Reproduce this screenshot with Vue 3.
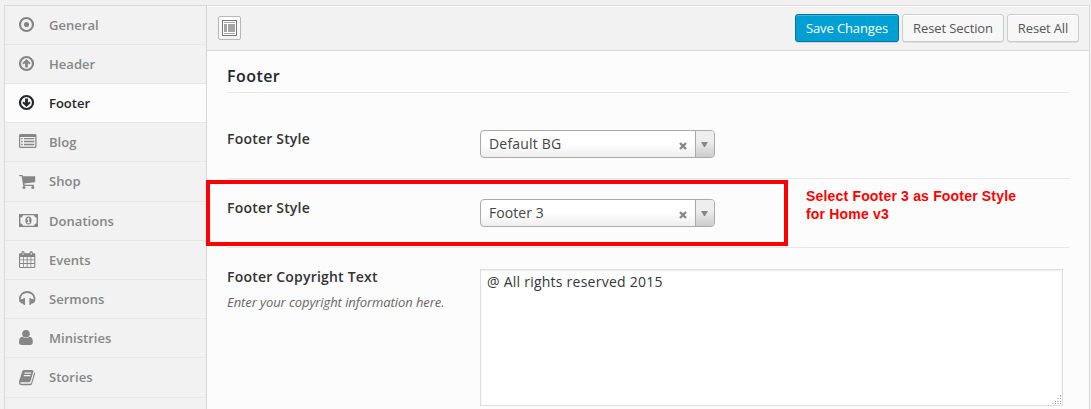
<script setup>
const items = [
  { label: 'General', icon: 'dot' },
  { label: 'Header', icon: 'up' },
  { label: 'Footer', icon: 'down', active: true },
  { label: 'Blog', icon: 'list' },
  { label: 'Shop', icon: 'cart', tall: true },
  { label: 'Donations', icon: 'money' },
  { label: 'Events', icon: 'calendar' },
  { label: 'Sermons', icon: 'headphones' },
  { label: 'Ministries', icon: 'user' },
  { label: 'Stories', icon: 'book', tall: true },
]
const selects = ['Default BG', 'Footer 3']
</script>

<template>
  <div class="page">
    <div class="panel">
      <nav class="sidebar">
        <a v-for="item in items" :key="item.label" class="item" :class="{ active: item.active, tall: item.tall }">
          <svg class="icon" width="20" height="20" viewBox="0 0 20 20" fill="currentColor">
            <template v-if="item.icon === 'dot'">
              <circle cx="7.5" cy="9.5" r="6.5" fill="none" stroke="currentColor" stroke-width="2.2" />
              <circle cx="7.5" cy="9.5" r="2.6" />
            </template>
            <template v-else-if="item.icon === 'up'">
              <circle cx="7.5" cy="9.5" r="6.5" fill="none" stroke="currentColor" stroke-width="2.2" />
              <path d="M7.5 4.9L11.6 9.1L10.5 10.4L8.9 9.2V13.5H6.1V9.2L4.5 10.4L3.4 9.1Z" />
            </template>
            <template v-else-if="item.icon === 'down'">
              <circle cx="7.5" cy="9.5" r="6.5" fill="none" stroke="currentColor" stroke-width="2.2" />
              <path d="M7.5 14.1L11.6 9.9L10.5 8.6L8.9 9.8V5.5H6.1V9.8L4.5 8.6L3.4 9.9Z" />
            </template>
            <path v-else-if="item.icon === 'list'" fill-rule="evenodd" d="M1.5 2H16Q17.5 2 17.5 3.5V14.5Q17.5 16 16 16H1.5Q0 16 0 14.5V3.5Q0 2 1.5 2ZM1.2 5V14.2Q1.2 14.8 1.8 14.8H15.7Q16.3 14.8 16.3 14.2V5ZM2.2 6H3.7V7.3H2.2ZM5 6H15.3V7.3H5ZM2.2 8.7H3.7V10.2H2.2ZM5 8.7H15.3V10.2H5ZM2.2 11.7H3.7V13.2H2.2ZM5 11.7H15.3V13.2H5Z" />
            <template v-else-if="item.icon === 'cart'">
              <path d="M.6 4H3.2Q3.8 4 4 5.2H15.6Q16.2 5.2 16.2 5.8V10.6Q16.2 11.2 15.6 11.3L5.4 12.5L5.6 13.8H14.4Q15 13.8 15 14.4T14.4 15H4.8Q4.2 15 4.1 14.3L2.7 5.3H.6Q0 5.3 0 4.6T.6 4Z" />
              <circle cx="5" cy="16.6" r="1.5" /><circle cx="13.8" cy="16.6" r="1.5" />
            </template>
            <template v-else-if="item.icon === 'money'">
              <path fill-rule="evenodd" d="M0 3H19V16H0ZM4 4.3Q3.6 6.4 1.4 6.8V12.2Q3.6 12.6 4 14.7H15Q15.4 12.6 17.6 12.2V6.8Q15.4 6.4 15 4.3ZM9.5 5.4Q12.6 5.4 12.6 9.5T9.5 13.6T6.4 9.5T9.5 5.4ZM9.1 6.7L7.7 8L8.4 8.8L9 8.4V11.2H8V12.2H11.1V11.2H10.2V6.7Z" />
            </template>
            <path v-else-if="item.icon === 'calendar'" fill-rule="evenodd" d="M1.3 3.2H2.4V2.5Q2.4 1 4 1T5.6 2.5V3.2H10.6V2.5Q10.6 1 12.2 1T13.8 2.5V3.2H15Q16.3 3.2 16.3 4.5V16.8Q16.3 18 15 18H1.3Q0 18 0 16.8V4.5Q0 3.2 1.3 3.2ZM3.6 2.5V5H4.4V2.5ZM11.8 2.5V5H12.6V2.5ZM1.1 7V9.4H4V7ZM4.8 7V9.4H7.7V7ZM8.6 7V9.4H11.5V7ZM12.3 7V9.4H15.2V7ZM1.1 10.3V13.1H4V10.3ZM4.8 10.3V13.1H7.7V10.3ZM8.6 10.3V13.1H11.5V10.3ZM12.3 10.3V13.1H15.2V10.3ZM1.1 14V16.9H4V14ZM4.8 14V16.9H7.7V14ZM8.6 14V16.9H11.5V14ZM12.3 14V16.9H15.2V14Z" />
            <template v-else-if="item.icon === 'headphones'">
              <path fill="none" stroke="currentColor" stroke-width="1.8" d="M1.7 13Q.9 11.7 .9 9.8C.9 5.8 4.2 3 8.2 3S15.5 5.8 15.5 9.8Q15.5 11.7 14.7 13" />
              <path d="M6 9V16H4.8L4.4 14.9Q2 14.7 .8 12.8L1.8 10.6Q3 9.8 4.5 9.8L4.8 9ZM10.4 9V16H11.6L12 14.9Q14.4 14.7 15.6 12.8L14.6 10.6Q13.4 9.8 11.9 9.8L11.6 9Z" />
            </template>
            <template v-else-if="item.icon === 'user'">
              <circle cx="7" cy="5.8" r="3.8" />
              <path d="M3.5 8.8Q7 11.4 10.5 8.8C13 8.9 13.8 11.2 13.8 14Q13.8 17 11.2 17H2.6Q0 17 0 14C0 11.2 1 8.9 3.5 8.8Z" />
            </template>
            <template v-else>
              <path fill-rule="evenodd" d="M5 3H13.2Q14.8 3 14.4 4.5L11.6 14.1Q11.2 15.3 9.8 15.3H2Q1.3 15.3 1.2 16Q1.3 16.8 2.5 16.8H11Q11.9 16.8 12.2 16L15.1 6.3Q15.2 5.8 15.1 5Q16.4 5.5 16 7L13.2 16.6Q12.8 18.2 11.2 18.2H2.6Q0 18.2 0 15.8L.2 13.8L3.2 4.4Q3.7 3 5 3ZM5.7 5.6L5.4 6.7H12.1L12.4 5.6ZM4.9 8.1L4.6 9.2H11.3L11.6 8.1Z" />
            </template>
          </svg>
          <span>{{ item.label }}</span>
        </a>
      </nav>

      <main class="main">
        <header class="toolbar">
          <button class="expand" aria-label="Expand options">
            <svg width="15" height="16" viewBox="0 0 15 16">
              <rect x=".5" y=".5" width="14" height="15" fill="#fff" stroke="#777" />
              <path fill="#a5a5a5" d="M2 2H13V3H2ZM2 4H5V12H2ZM6 4H13V12H6ZM2 13H13V14H2Z" />
            </svg>
          </button>
          <div class="actions">
            <button class="btn primary">Save Changes</button>
            <button class="btn section">Reset Section</button>
            <button class="btn all">Reset All</button>
          </div>
        </header>

        <section class="content">
          <h2>Footer</h2>
          <div v-for="(value, i) in selects" :key="value" class="row" :class="{ first: i === 0 }">
            <div class="label">Footer Style</div>
            <div class="select">
              <span class="value">{{ value }}</span>
              <svg class="clear" width="8" height="8" viewBox="0 0 8 8"><path d="M1 1L7 7M7 1L1 7" stroke="#888" stroke-width="2.4" /></svg>
              <span class="arrow"><svg width="7" height="5" viewBox="0 0 7 5"><path d="M0 0H7L4 5H3Z" fill="#888" /></svg></span>
            </div>
          </div>
          <div class="row last">
            <div class="label">
              Footer Copyright Text
              <p>Enter your copyright information here.</p>
            </div>
            <div class="field">
              <textarea spellcheck="false">@ All rights reserved 2015</textarea>
              <svg class="grip" width="10" height="10" viewBox="0 0 10 10">
                <path fill="#999" d="M8 0h1v1h-1zM8 3h1v1h-1zM3 6h1v1h-1zM8 6h1v1h-1zM3 8h1v1h-1zM8 8h1v1h-1z" />
                <path fill="#ccc" d="M8 1h1v1h-1zM5 3h2v1h-2zM5 6h2v1h-2zM0 8h2v1h-2zM5 8h2v1h-2z" />
              </svg>
            </div>
          </div>
        </section>
      </main>
    </div>
    <div class="highlight"></div>
    <div class="note">Select Footer 3 as Footer Style<br />for Home v3</div>
  </div>
</template>

<style>
body { margin: 0; background: #f1f1f1; }
</style>

<style scoped>
* { box-sizing: border-box; }
.page { position: relative; width: 1091px; height: 409px; overflow: hidden; padding: 5px 1px 0 4px; background: #f1f1f1; font-family: "Open Sans", "Noto Sans", sans-serif; }
.panel { display: flex; height: 420px; border: 1px solid #dadada; background: #f2f2f2; }
.sidebar { width: 201px; flex: none; }
.item { display: flex; align-items: flex-start; height: 39px; border-bottom: 1px solid #e7e7e7; color: #868686; padding: 9px 0 0 14px; font-size: 13px; font-weight: 600; line-height: 20px; letter-spacing: .04px; }
.item.tall { height: 40px; }
.item.active { background: #fcfcfc; color: #23282d; letter-spacing: 0; }
.icon { flex: none; margin-right: 10px; }
.main { flex: 1; border-left: 1px solid #d5d5d5; background: #fcfcfc; }
.toolbar { height: 45px; display: flex; justify-content: space-between; align-items: flex-start; border-top: 1px solid #fff; border-bottom: 1px solid #d8d8d8; background: #f2f2f2; padding: 7px 10px 0 11px; }
button { font-family: inherit; margin: 0; padding: 0; }
.expand { margin-top: 2px; width: 23px; height: 24px; border: 1px solid #b8b8b8; border-radius: 2px; background: linear-gradient(#fff, #f3f3f3); display: flex; align-items: center; justify-content: center; }
.actions { display: flex; gap: 3px; }
.btn { height: 28px; border: 1px solid #ccc; border-radius: 3px; background: #f7f7f7; box-shadow: inset 0 1px 0 #fff, 0 1px 0 rgba(0, 0, 0, .08); color: #555; font-size: 13px; line-height: 26px; text-align: center; white-space: nowrap; letter-spacing: -.1px; }
.primary { width: 104px; background: #00a0d2; border-color: #0073aa; color: #fff; box-shadow: inset 0 1px 0 rgba(120, 200, 230, .5), 0 1px 0 rgba(0, 0, 0, .1); }
.section { width: 102px; }
.all { width: 72px; letter-spacing: -.15px; }
.content { padding: 0 20px; }
h2 { margin: 0; height: 42px; border-bottom: 1px solid #e7e7e7; padding-top: 13px; font-size: 16px; line-height: 24px; font-weight: 600; letter-spacing: .45px; color: #23282d; }
.row { display: flex; height: 69px; padding-top: 20px; border-bottom: 1px solid #e7e7e7; }
.row.first { height: 86px; padding-top: 37px; }
.row.last { height: 170px; padding-top: 21px; border: 0; }
.label { width: 253px; flex: none; margin-top: -1px; color: #333; font-size: 14px; line-height: 19px; font-weight: 600; letter-spacing: .2px; }
.row.last .label { margin-top: -2px; }
.label p { margin: 7px 0 0; font-size: 13px; line-height: 18px; font-weight: 400; font-style: italic; letter-spacing: -.08px; color: #666; }
.select { display: flex; align-items: center; width: 235px; height: 28px; border: 1px solid #aaa; border-radius: 4px; background: linear-gradient(#fff 50%, #eee); overflow: hidden; }
.value { flex: 1; padding-left: 8px; font-size: 14px; line-height: 26px; letter-spacing: .05px; color: #444; }
.first .value { letter-spacing: .2px; }
.clear { margin: 4px 8px 0 0; }
.arrow { width: 19px; height: 26px; border-left: 1px solid #aaa; background: linear-gradient(#eee 40%, #ccc); display: flex; align-items: flex-start; padding: 11px 0 0 5px; }
.arrow svg { flex: none; }
.field { position: relative; width: 583px; height: 137px; }
textarea { display: block; width: 100%; height: 100%; margin: 0; resize: none; border: 1px solid #ddd; border-radius: 0; background: #fff; box-shadow: inset 0 1px 2px rgba(0, 0, 0, .07); padding: 2px 6px; font-family: inherit; font-size: 14px; line-height: 20px; letter-spacing: .24px; color: #32373c; outline: none; }
.grip { position: absolute; right: 1px; bottom: 1px; }
.highlight { position: absolute; left: 206px; top: 180px; width: 582px; height: 66px; border: 4px solid #f00; }
.note { position: absolute; left: 806px; top: 187px; color: #f00; font: bold 14px/18px "Liberation Sans", Arial, sans-serif; letter-spacing: .18px; white-space: nowrap; }
</style>
